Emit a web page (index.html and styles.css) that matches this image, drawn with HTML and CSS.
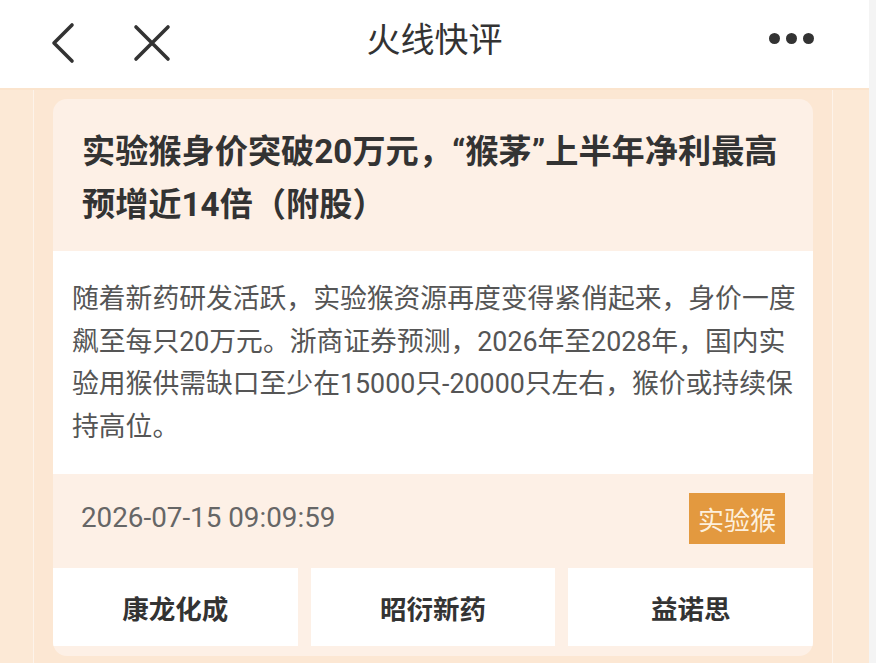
FILE: index.html
```html
<!DOCTYPE html>
<html lang="zh-CN">
<head>
<meta charset="utf-8">
<title>火线快评</title>
<link rel="stylesheet" href="styles.css">
</head>
<body>
<div class="page">
  <header class="topbar">
    <div class="nav-left">
      <svg class="icon back" width="30" height="44" viewBox="0 0 30 44"><path d="M23 4 L5 22 L23 40" fill="none" stroke="#333" stroke-width="3.6" stroke-linecap="round" stroke-linejoin="round"/></svg>
      <svg class="icon close" width="40" height="40" viewBox="0 0 40 40"><path d="M4 4 L36 36 M36 4 L4 36" fill="none" stroke="#333" stroke-width="3.6" stroke-linecap="round"/></svg>
    </div>
    <h1 class="topbar-title">火线快评</h1>
    <div class="nav-right">
      <span class="dot"></span><span class="dot"></span><span class="dot"></span>
    </div>
  </header>
  <main class="main">
    <div class="column">
      <article class="card">
        <h2 class="card-title">实验猴身价突破20万元，“猴茅”上半年净利最高预增近14倍（附股）</h2>
        <p class="card-body">随着新药研发活跃，实验猴资源再度变得紧俏起来，身价一度飙至每只20万元。浙商证券预测，2026年至2028年，国内实验用猴供需缺口至少在15000只-20000只左右，猴价或持续保持高位。</p>
        <div class="card-meta">
          <span class="date">2026-07-15 09:09:59</span>
          <span class="tag">实验猴</span>
        </div>
        <div class="stocks">
          <div class="stock">康龙化成</div>
          <div class="stock">昭衍新药</div>
          <div class="stock">益诺思</div>
        </div>
      </article>
    </div>
  </main>
</div>
</body>
</html>
```

FILE: styles.css
```css
html, body {
  margin: 0;
  padding: 0;
}
body {
  background: #f4f4f4;
  font-family: Roboto, "Noto Sans CJK SC", sans-serif;
  width: 876px;
  height: 663px;
  overflow: hidden;
}
.page {
  width: 869px;
  height: 663px;
  background: #fce9d6;
  display: flex;
  flex-direction: column;
}
.topbar {
  height: 88px;
  background: #ffffff;
  display: flex;
  align-items: center;
  position: relative;
  flex-shrink: 0;
}
.nav-left {
  display: flex;
  align-items: center;
  padding-left: 49px;
  gap: 53px;
  margin-top: -2px;
}
.icon { display: block; }
.topbar-title {
  position: absolute;
  left: 0;
  right: 0;
  top: 0;
  margin: 0;
  text-align: center;
  line-height: 76px;
  font-size: 34px;
  font-weight: 400;
  color: #333;
  font-family: "Noto Sans CJK SC", sans-serif;
  pointer-events: none;
}
.nav-right {
  margin-left: auto;
  margin-right: 55px;
  display: flex;
  gap: 6px;
  margin-top: -12px;
}
.dot {
  width: 11px;
  height: 11px;
  border-radius: 50%;
  background: #333;
}
.main {
  flex: 1;
  display: flex;
  padding-left: 33px;
  border-top: 2px solid #fbe4cd;
}
.column {
  width: 760px;
  padding: 9px 19px 0;
  border-left: 1px solid #fdf3ea;
  border-right: 1px solid #fdf3ea;
  background: #fce7d3;
}
.card {
  background: #fdf0e6;
  border-radius: 14px;
  overflow: hidden;
  padding-bottom: 10px;
}
.card-title {
  margin: 0;
  padding: 26px 20px 20px 29px;
  font-family: Roboto, "Noto Sans CJK SC", sans-serif;
  font-size: 33.2px;
  line-height: 53px;
  font-weight: 700;
  color: #333;
}
.card-body {
  margin: 0;
  background: #fff;
  padding: 27px 10px 26px 19px;
  font-family: Roboto, "Noto Sans CJK SC", sans-serif;
  font-size: 26.8px;
  line-height: 42.5px;
  color: #555;
}
.card-meta {
  display: flex;
  align-items: center;
  justify-content: space-between;
  padding: 19px 28px 24px 28px;
}
.date {
  font-family: Roboto, sans-serif;
  font-size: 27.8px;
  color: #666;
  margin-top: -2px;
}
.tag {
  background: #e3993f;
  color: #fdf0dd;
  font-family: "Noto Sans CJK SC", sans-serif;
  font-size: 26px;
  line-height: 51px;
  padding: 0 9px;
}
.stocks {
  display: grid;
  grid-template-columns: repeat(3, 1fr);
  gap: 13px;
}
.stock {
  background: #fff;
  height: 78px;
  display: flex;
  align-items: center;
  justify-content: center;
  font-family: "Noto Sans CJK SC", sans-serif;
  font-size: 26.5px;
  font-weight: 700;
  color: #333;
}
```
